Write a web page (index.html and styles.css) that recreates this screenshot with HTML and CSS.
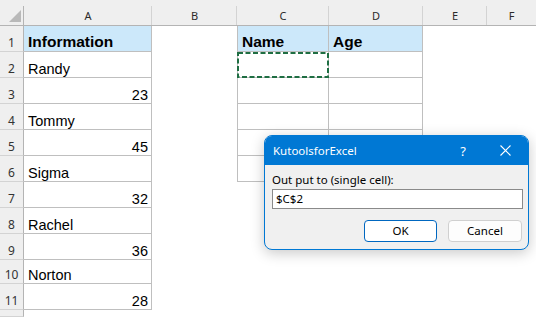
FILE: index.html
```html
<!DOCTYPE html>
<html>
<head>
<meta charset="utf-8">
<link rel="stylesheet" href="styles.css">
</head>
<body>
<div class="sheet">
  <div class="corner"><span class="tri"></span></div>
  <div class="ch">A</div><div class="ch">B</div><div class="ch">C</div><div class="ch">D</div><div class="ch">E</div><div class="ch last">F</div>

  <div class="rh">1</div><div class="c b hd">Information</div><div></div><div class="c b bl hd">Name</div><div class="c b hd">Age</div><div></div><div></div>
  <div class="rh">2</div><div class="c b">Randy</div><div></div><div class="c b bl sel"><svg class="marquee" width="92" height="26"><rect x="1" y="1" width="90" height="24"/></svg></div><div class="c b"></div><div></div><div></div>
  <div class="rh">3</div><div class="c b num">23</div><div></div><div class="c b bl"></div><div class="c b"></div><div></div><div></div>
  <div class="rh">4</div><div class="c b">Tommy</div><div></div><div class="c b bl"></div><div class="c b"></div><div></div><div></div>
  <div class="rh">5</div><div class="c b num">45</div><div></div><div class="c b bl"></div><div class="c b"></div><div></div><div></div>
  <div class="rh">6</div><div class="c b">Sigma</div><div></div><div class="c b bl"></div><div class="c b"></div><div></div><div></div>
  <div class="rh">7</div><div class="c b num">32</div><div></div><div></div><div></div><div></div><div></div>
  <div class="rh">8</div><div class="c b">Rachel</div><div></div><div></div><div></div><div></div><div></div>
  <div class="rh">9</div><div class="c b num">36</div><div></div><div></div><div></div><div></div><div></div>
  <div class="rh">10</div><div class="c b">Norton</div><div></div><div></div><div></div><div></div><div></div>
  <div class="rh">11</div><div class="c b num">28</div><div></div><div></div><div></div><div></div><div></div>
  <div class="rh"></div>
</div>

<div class="dialog">
  <div class="titlebar">
    <span class="title">KutoolsforExcel</span>
    <span class="help">?</span>
    <span class="close"><svg width="11" height="11" viewBox="0 0 11 11"><path d="M0.5 0.5 L10.5 10.5 M10.5 0.5 L0.5 10.5"/></svg></span>
  </div>
  <div class="dbody">
    <div class="label">Out put to (single cell):</div>
    <div class="input">$C$2</div>
    <div class="buttons">
      <div class="btn primary">OK</div>
      <div class="btn">Cancel</div>
    </div>
  </div>
</div>
</body>
</html>
```
FILE: styles.css
```css
* { box-sizing: border-box; }
body {
  margin: 0;
  width: 536px;
  height: 317px;
  overflow: hidden;
  background: #fff;
  font-family: "Liberation Sans", Arial, sans-serif;
  position: relative;
}
.sheet {
  display: grid;
  grid-template-columns: 24px 128px 85px 92px 94px 64px 1fr;
  grid-template-rows: repeat(10, 26px) 24px 26px 1fr;
  height: 317px;
}
.corner, .ch {
  background: #efefef linear-gradient(#d3d3d3, #d3d3d3) no-repeat right bottom / 1px 19px;
  border-bottom: 1px solid #b4b4b4;
}
.corner { position: relative; background-image: linear-gradient(#b4b4b4, #b4b4b4); }
.tri {
  position: absolute;
  left: 9px;
  top: 10px;
  width: 0;
  height: 0;
  border-style: solid;
  border-width: 0 0 12px 12px;
  border-color: transparent transparent #b9b9b9 transparent;
}
.ch {
  display: flex;
  align-items: flex-end;
  justify-content: center;
  padding-bottom: 3px;
  font-family: "Noto Sans", "Liberation Sans", sans-serif;
  font-size: 11px;
  line-height: 12px;
  color: #2b2b2b;
}
.ch.last { background-image: none; }
.rh {
  background: #efefef;
  border-right: 1px solid #b4b4b4;
  border-bottom: 1px solid #d3d3d3;
  display: flex;
  align-items: flex-end;
  justify-content: center;
  padding-bottom: 2px;
  font-family: "Noto Sans", "Liberation Sans", sans-serif;
  font-size: 12px;
  line-height: 13px;
  color: #333;
}
.c {
  display: flex;
  align-items: flex-end;
  padding: 0 3px 0 4px;
  font-size: 14.5px;
  line-height: 16px;
  color: #000;
}
.b { border-right: 1px solid #bfbfbf; border-bottom: 1px solid #bfbfbf; }
.bl { border-left: 1px solid #bfbfbf; }
.hd { background: #cce8fa; font-weight: bold; font-size: 15.5px; padding-bottom: 1px; }
.num { justify-content: flex-end; }
.sel { position: relative; }
.marquee {
  position: absolute;
  left: -1px;
  top: 0;
}
.marquee rect {
  fill: none;
  stroke: #1f6e43;
  stroke-width: 2;
  stroke-dasharray: 5 2.5;
}

.dialog {
  position: absolute;
  left: 264px;
  top: 135px;
  width: 265px;
  height: 115px;
  border: 1px solid #0078d4;
  border-radius: 8px;
  background: #f0f0f0;
  overflow: hidden;
  box-shadow: 0 3px 14px rgba(0, 0, 0, 0.22);
  font-family: "Noto Sans", "Open Sans", sans-serif;
}
.titlebar {
  height: 29px;
  background: #0078d4;
  color: #fff;
  display: flex;
  align-items: center;
  padding-left: 8px;
  font-size: 11.5px;
}
.title { flex: 1; }
.help { width: 14px; text-align: center; font-size: 13px; margin-right: 30px; }
.close { display: flex; width: 12px; margin-right: 16px; }
.close path { stroke: #fff; stroke-width: 1.1; fill: none; }
.dbody {
  padding: 7px 5px 0 7px;
}
.label {
  font-size: 11.5px;
  line-height: 16px;
  color: #000;
  margin-bottom: 1px;
}
.input {
  height: 20px;
  background: #fff;
  border: 1px solid #8a8a8a;
  font-size: 11.5px;
  line-height: 18px;
  padding-left: 3px;
  color: #000;
}
.buttons {
  display: flex;
  justify-content: flex-end;
  gap: 11px;
  margin-top: 11px;
  margin-right: 1px;
}
.btn {
  width: 74px;
  height: 22px;
  border: 1px solid #d0d0d0;
  border-radius: 4px;
  background: #fdfdfd;
  font-size: 11.5px;
  line-height: 20px;
  text-align: center;
  color: #000;
}
.btn.primary {
  width: 73px;
  border: 1.5px solid #0067c0;
  background: #fff;
}
```
